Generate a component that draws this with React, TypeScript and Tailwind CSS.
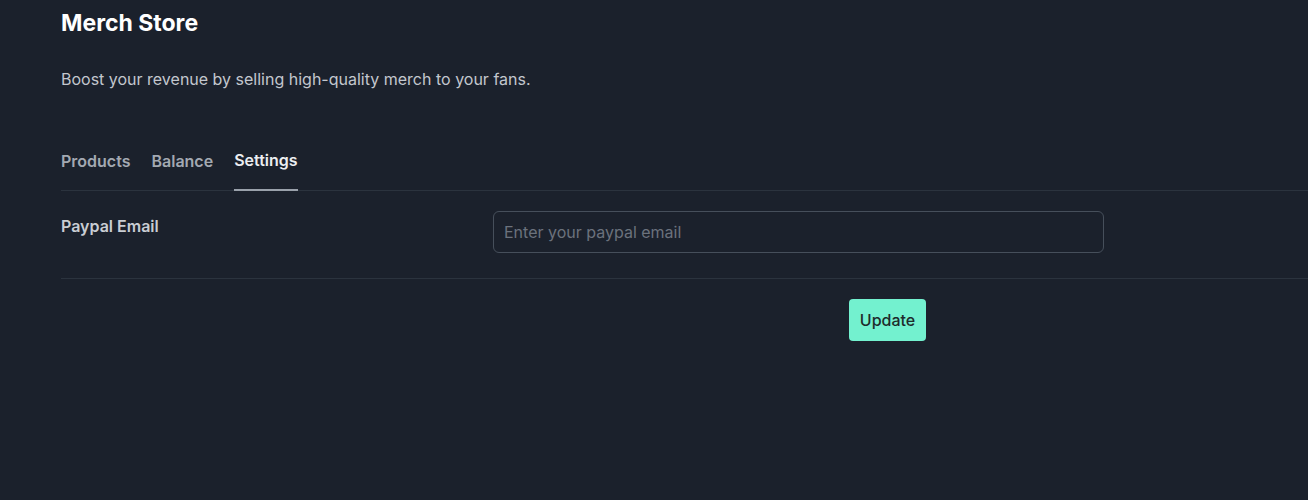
import React from 'react';

export default function App() {
    const tabs = ['Products', 'Balance', 'Settings'];
    const active = 'Settings';

    return (
        <div className="min-h-[500px] w-full overflow-hidden bg-[#1b212c] font-['Inter',sans-serif]">
            <div className="pl-[61px]">
                <h1 className="pt-[9px] text-[23px] font-bold leading-[28px] text-white">Merch Store</h1>
                <p className="mt-[32px] text-[16px] leading-[20px] text-[#c3c7ce]">
                    Boost your revenue by selling high-quality merch to your fans.
                </p>

                <div className="mt-[61px] flex gap-[21px] border-b border-[#2b333e]">
                    {tabs.map((tab) => (
                        <button
                            key={tab}
                            className={
                                tab === active
                                    ? 'border-b-2 border-[#9aa1ab] pb-[19px] text-[16px] font-semibold leading-[20px] text-[#eceef1] -mb-px'
                                    : 'pb-[19px] text-[16px] font-semibold leading-[20px] text-[#a3a9b2]'
                            }
                        >
                            {tab}
                        </button>
                    ))}
                </div>

                <div className="flex border-b border-[#2b333e] pt-[20px] pb-[25px]">
                    <label className="w-[432px] pt-[5px] text-[16px] font-semibold leading-[20px] text-[#c9cdd3]">
                        Paypal Email
                    </label>
                    <input
                        type="email"
                        placeholder="Enter your paypal email"
                        className="h-[42px] w-[611px] rounded-md border border-[#464f5b] bg-transparent px-[10px] text-[16px] text-white outline-none placeholder:text-[#6b727d]"
                    />
                </div>

                <div className="flex pt-[20px] pl-[788px]">
                    <button className="h-[42px] w-[77px] rounded-[4px] bg-[#73f1cf] text-[16px] font-medium text-[#1e2b2b]">
                        Update
                    </button>
                </div>
            </div>
        </div>
    );
}
